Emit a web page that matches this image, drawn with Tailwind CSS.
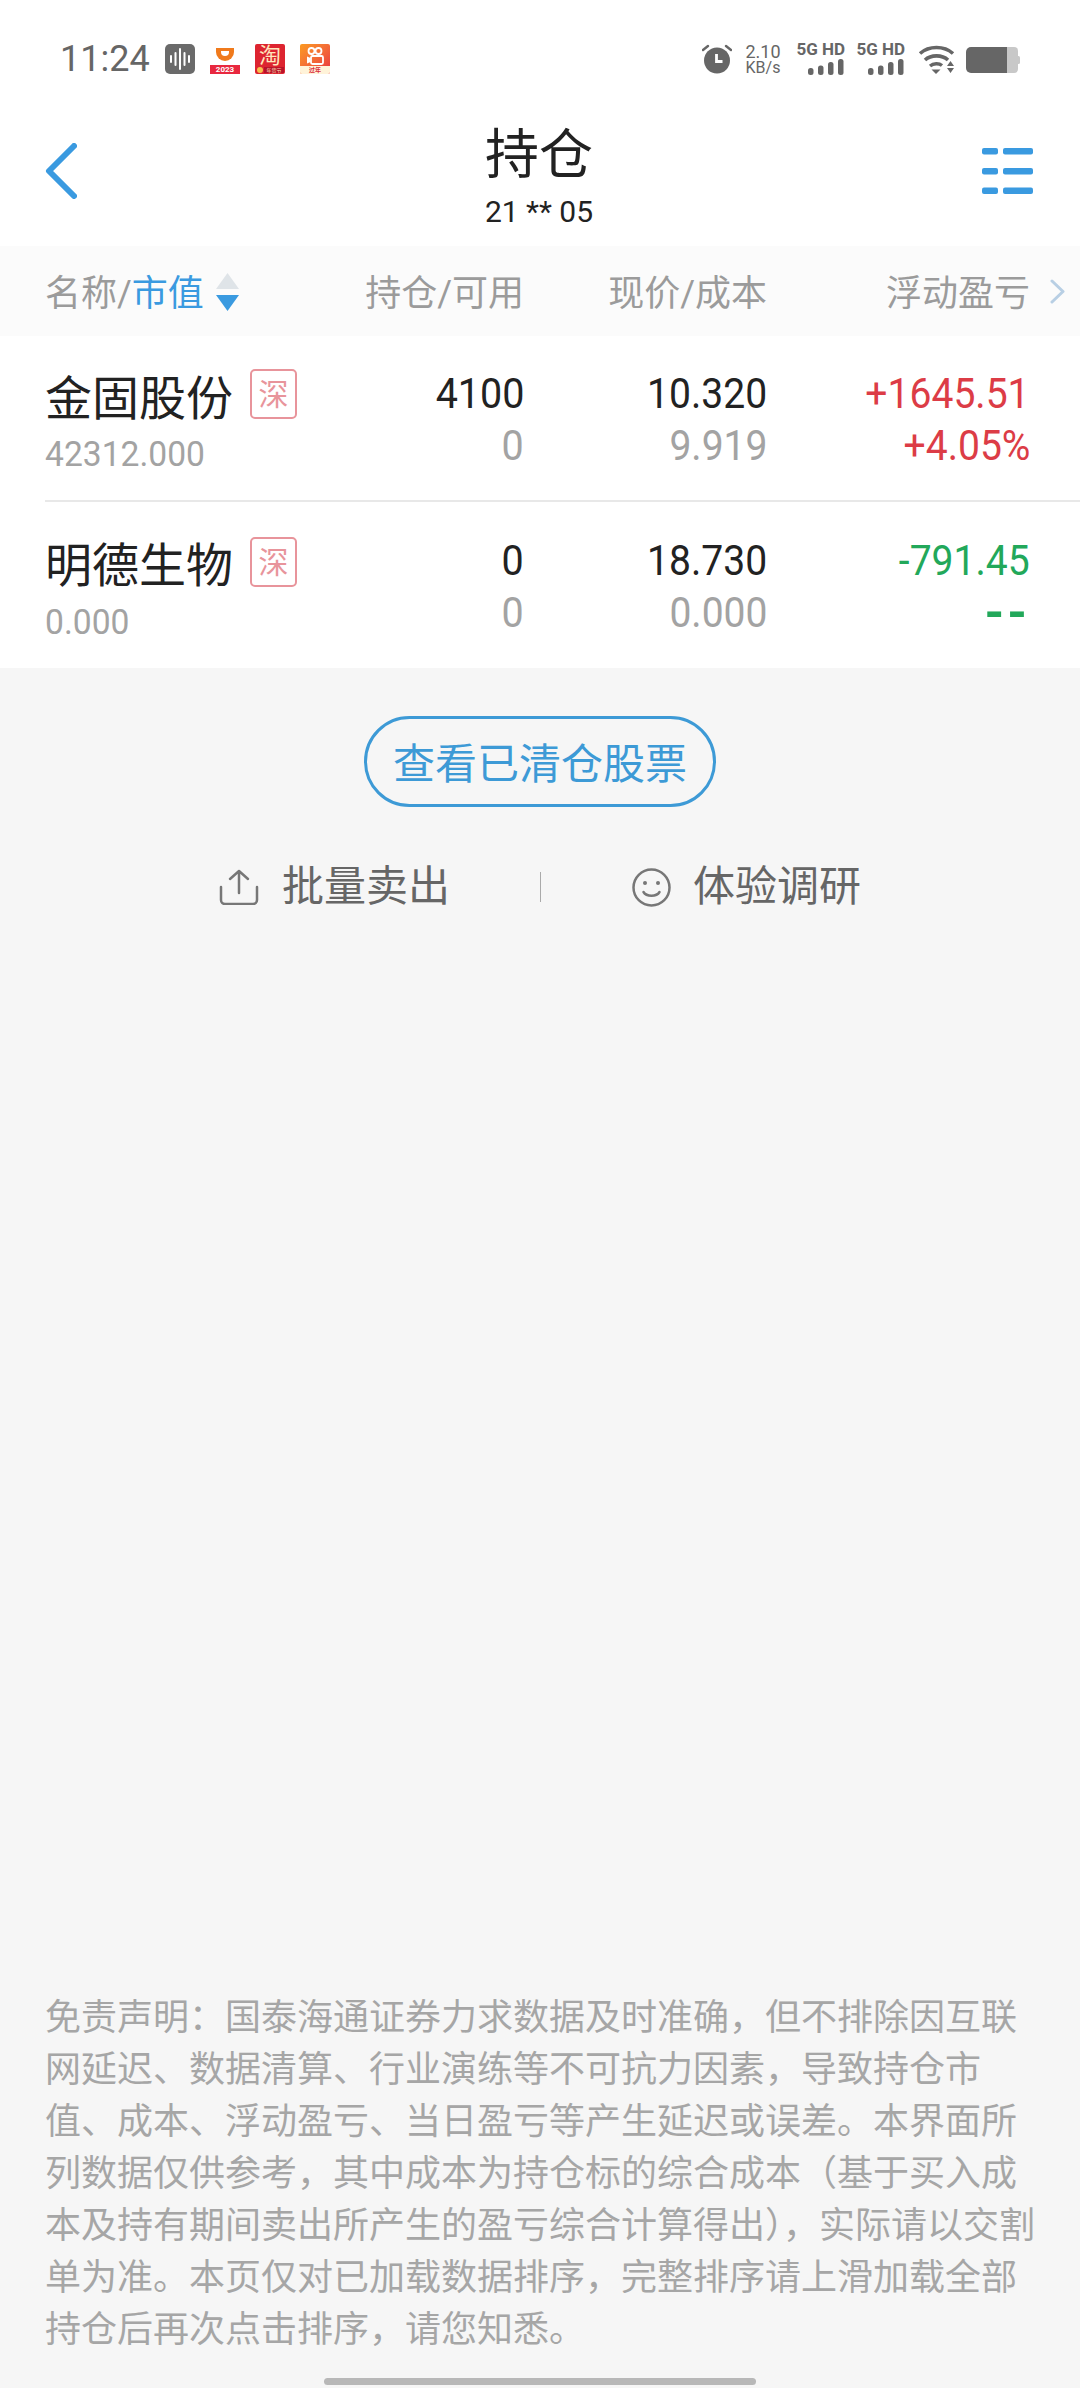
<!DOCTYPE html>
<html lang="zh-CN">
<head>
  <meta charset="UTF-8">
  <meta name="viewport" content="width=device-width, initial-scale=1.0">
  <title>持仓</title>
  <script src="https://cdn.jsdelivr.net/npm/@tailwindcss/browser@4"></script>
</head>
<body class="bg-[#f6f6f6] font-['Roboto','Noto_Sans_CJK_SC',sans-serif]">
  <div class="flex flex-col w-[1080px] h-[2388px] overflow-hidden">

    <!-- status bar -->
    <div class="flex justify-between items-start h-[100px] pt-[44px] pl-[60px] pr-[60px] bg-white text-[#666]">
      <div class="flex items-center h-[30px]">
        <span class="text-[36px] leading-[30px] w-[89px] mr-[16px]">11:24</span>
        <div class="flex gap-[15px]">
          <svg width="30" height="30" viewBox="0 0 30 30">
            <rect width="30" height="30" rx="5" fill="#6a6a6a"/>
            <path d="M6 12v6M10.500 9v12M15 5v20M19.500 9v12M24 12v6" stroke="#fff" stroke-width="2" stroke-linecap="round"/>
          </svg>
          <div class="relative w-[30px] h-[30px] bg-white overflow-hidden">
            <svg class="absolute left-0 top-0" width="30" height="30" viewBox="0 0 30 30">
              <path d="M6 4h18v4a9 9 0 0 1-18 0z" fill="#f07a1c"/>
              <path d="M11 7h8v1a4 4 0 0 1-8 0z" fill="#fff"/>
              <rect y="21" width="30" height="9" fill="#e8283f"/>
            </svg>
            <span class="absolute left-0 right-0 bottom-0 text-center text-[8px] leading-[9px] font-bold text-white">2023</span>
          </div>
          <div class="relative w-[30px] h-[30px] rounded-[2px] bg-[#dd2430] overflow-hidden">
            <span class="absolute left-0 right-0 top-[1px] text-center text-[22px] leading-[22px] text-[#ffe6bd]">淘</span>
            <span class="absolute left-[9px] right-[1px] bottom-[1px] bg-[#b8122a] text-center text-[5px] leading-[6px] text-[#ffe6bd]">年货节</span>
            <span class="absolute left-[2px] bottom-[1px] w-[6px] h-[6px] rounded-full bg-[#f6c04e]"></span>
          </div>
          <div class="relative w-[30px] h-[30px] rounded-[2px] bg-gradient-to-br from-[#fb9a1e] to-[#e8283f] overflow-hidden">
            <svg class="absolute left-0 top-0" width="30" height="30" viewBox="0 0 30 30">
              <circle cx="11.500" cy="7" r="3" fill="none" stroke="#fff" stroke-width="1.800"/>
              <circle cx="18.500" cy="7" r="3" fill="none" stroke="#fff" stroke-width="1.800"/>
              <rect x="11" y="12" width="12" height="8" rx="1.500" fill="none" stroke="#fff" stroke-width="1.800"/>
              <path d="M10.500 14l-3.500-1.500v7l3.500-1.500z" fill="#fff"/>
            </svg>
            <span class="absolute left-0 right-0 bottom-0 h-[8px] bg-[#fff3d9] text-center text-[6px] leading-[8px] font-bold text-[#d92b3a]">过年</span>
          </div>
        </div>
      </div>

      <div class="flex items-start h-[30px]">
        <svg class="mr-[13px]" width="30" height="30" viewBox="0 0 30 30">
          <circle cx="15" cy="16.500" r="13" fill="#666"/>
          <path d="M1 6l5-4M29 6l-5-4" stroke="#666" stroke-width="2.400" stroke-linecap="round"/>
          <path d="M14.500 10v7.500h6" fill="none" stroke="#fff" stroke-width="2.800"/>
        </svg>
        <div class="flex flex-col items-center w-[36px] mr-[15px]">
          <span class="text-[18px] leading-[15px]">2.10</span>
          <span class="text-[16px] leading-[14px] mt-[2px]">KB/s</span>
        </div>
        <div class="flex flex-col items-end w-[49px] mr-[11px] -mt-[1px]">
          <span class="text-[17px] leading-[13px] font-bold whitespace-nowrap">5G HD</span>
          <svg class="mt-[3px] mr-[1px]" width="36" height="16" viewBox="0 0 36 16">
            <rect x="0" y="9" width="5.500" height="7" rx="2.500" fill="#666"/>
            <rect x="10" y="6.500" width="5.500" height="9.500" rx="2.500" fill="#666"/>
            <rect x="20" y="3" width="5.500" height="13" rx="2.500" fill="#666"/>
            <rect x="30" y="0" width="5.500" height="16" rx="2.500" fill="#666"/>
          </svg>
        </div>
        <div class="flex flex-col items-end w-[49px] mr-[13px] -mt-[1px]">
          <span class="text-[17px] leading-[13px] font-bold whitespace-nowrap">5G HD</span>
          <svg class="mt-[3px] mr-[1px]" width="36" height="16" viewBox="0 0 36 16">
            <rect x="0" y="9" width="5.500" height="7" rx="2.500" fill="#666"/>
            <rect x="10" y="6.500" width="5.500" height="9.500" rx="2.500" fill="#666"/>
            <rect x="20" y="3" width="5.500" height="13" rx="2.500" fill="#666"/>
            <rect x="30" y="0" width="5.500" height="16" rx="2.500" fill="#666"/>
          </svg>
        </div>
        <svg class="mr-[11px] mt-[1px]" width="37" height="29" viewBox="0 0 37 29">
          <path d="M2 8.500C11 0.500 26 0.500 35 8.500" fill="none" stroke="#666" stroke-width="3.600"/>
          <path d="M7 15C13 9.500 24 9.500 30 15" fill="none" stroke="#666" stroke-width="3.600"/>
          <path d="M12 21C15.500 18 21 18 24 20.500" fill="none" stroke="#666" stroke-width="3.400"/>
          <path d="M13.500 24.500h9l-4.500 4.500z" fill="#666"/>
          <path d="M32.500 16l3.500 5h-7zM29 23h7l-3.500 5z" fill="#666"/>
        </svg>
        <svg class="mt-[3px]" width="54" height="26" viewBox="0 0 54 26">
          <path d="M41 0h7a4 4 0 0 1 4 4v18a4 4 0 0 1-4 4h-7z" fill="#c8c8c8"/>
          <path d="M52 9h0.500a1.500 1.500 0 0 1 1.500 1.500v5a1.500 1.500 0 0 1-1.500 1.500H52z" fill="#c8c8c8"/>
          <path d="M5 0h36v26H5a5 5 0 0 1-5-5V5a5 5 0 0 1 5-5z" fill="#666"/>
        </svg>
      </div>
    </div>

    <!-- title bar -->
    <div class="grid grid-cols-[1fr_auto_1fr] items-center h-[146px] pb-[4px] pl-[45px] pr-[47px] bg-white">
      <svg width="32" height="56" viewBox="0 0 32 56">
        <path d="M29 3L4 28l25 25" fill="none" stroke="#3a9ae0" stroke-width="6" stroke-linecap="round" stroke-linejoin="round"/>
      </svg>
      <div class="flex flex-col items-center pt-[11px] text-[#222]">
        <span class="text-[54px] leading-[60px]">持仓</span>
        <span class="text-[30px] leading-[30px] mt-[11px]">21 ** 05</span>
      </div>
      <svg class="justify-self-end" width="51" height="46" viewBox="0 0 51 46">
        <g fill="#3a9ae0">
          <rect x="0" y="0" width="16" height="6.500" rx="2"/>
          <rect x="21" y="0" width="30" height="6.500" rx="2"/>
          <rect x="0" y="20" width="16" height="6.500" rx="2"/>
          <rect x="21" y="20" width="30" height="6.500" rx="2"/>
          <rect x="0" y="39.500" width="16" height="6.500" rx="2"/>
          <rect x="21" y="39.500" width="30" height="6.500" rx="2"/>
        </g>
      </svg>
    </div>

    <!-- column headers -->
    <div class="relative grid grid-cols-[300px_179px_243px_263px] items-center h-[90px] pt-[5px] pl-[45px] pr-[50px] bg-[#fbfbfb] text-[36px] text-[#9b9b9b]">
      <div class="flex items-center">
        <span>名称/<span class="text-[#3a9ae0]">市值</span></span>
        <svg class="ml-[12px] -mt-[4px]" width="23" height="38" viewBox="0 0 23 38">
          <path d="M11.500 0L23 16H0z" fill="#dfe4e8"/>
          <path d="M0 22h23L11.500 38z" fill="#3a9ae0"/>
        </svg>
      </div>
      <span class="text-right">持仓/可用</span>
      <span class="text-right">现价/成本</span>
      <span class="text-right">浮动盈亏</span>
      <svg class="absolute right-[15px] top-[33px]" width="15" height="25" viewBox="0 0 15 25">
        <path d="M2 2l11 10.500L2 23" fill="none" stroke="#b8cfe4" stroke-width="3" stroke-linecap="round" stroke-linejoin="round"/>
      </svg>
    </div>

    <!-- holdings -->
    <div class="bg-white pl-[45px]">
      <div class="grid grid-cols-[300px_179px_243px_263px] h-[166px] pr-[50px] border-b-2 border-[#e8e8e8]">
        <div class="pt-[34px]">
          <div class="flex items-start">
            <span class="text-[47px] leading-[58px] text-[#222]">金固股份</span>
            <span class="flex items-center justify-center w-[47px] h-[50px] ml-[17px] -mt-[1px] rounded-[5px] border-2 border-[#e8949b] text-[30px] text-[#e8949b]">深</span>
          </div>
          <div class="text-[35px] leading-[40px] mt-[7px] font-[430] text-[#a3a3a3] scale-x-[.96] origin-left">42312.000</div>
        </div>
        <div class="flex flex-col items-end pt-[32px] text-[42px] leading-[52px] font-[430]">
          <span class="text-[#222] scale-x-[.94] origin-right">4100</span>
          <span class="text-[#a3a3a3] scale-x-[.94] origin-right">0</span>
        </div>
        <div class="flex flex-col items-end pt-[32px] text-[42px] leading-[52px] font-[430]">
          <span class="text-[#222] scale-x-[.93] origin-right">10.320</span>
          <span class="text-[#a3a3a3] scale-x-[.93] origin-right">9.919</span>
        </div>
        <div class="flex flex-col items-end pt-[32px] text-[42px] leading-[52px] font-[430] text-[#dc3c46]">
          <span class="scale-x-[.93] origin-right">+1645.51</span>
          <span class="scale-x-[.93] origin-right">+4.05%</span>
        </div>
      </div>
      <div class="grid grid-cols-[300px_179px_243px_263px] h-[166px] pr-[50px]">
        <div class="pt-[35px]">
          <div class="flex items-start">
            <span class="text-[47px] leading-[58px] text-[#222]">明德生物</span>
            <span class="flex items-center justify-center w-[47px] h-[50px] ml-[17px] rounded-[5px] border-2 border-[#e8949b] text-[30px] text-[#e8949b]">深</span>
          </div>
          <div class="text-[35px] leading-[40px] mt-[8px] font-[430] text-[#a3a3a3] scale-x-[.96] origin-left">0.000</div>
        </div>
        <div class="flex flex-col items-end pt-[33px] text-[42px] leading-[52px] font-[430]">
          <span class="text-[#222] scale-x-[.94] origin-right">0</span>
          <span class="text-[#a3a3a3] scale-x-[.94] origin-right">0</span>
        </div>
        <div class="flex flex-col items-end pt-[33px] text-[42px] leading-[52px] font-[430]">
          <span class="text-[#222] scale-x-[.93] origin-right">18.730</span>
          <span class="text-[#a3a3a3] scale-x-[.93] origin-right">0.000</span>
        </div>
        <div class="flex flex-col items-end pt-[33px] text-[42px] leading-[52px] font-[430] text-[#22a85a]">
          <span class="scale-x-[.93] origin-right">-791.45</span>
          <span class="text-[50px] font-bold tracking-[3px]">--</span>
        </div>
      </div>
    </div>

    <!-- cleared positions link -->
    <div class="flex justify-center mt-[48px]">
      <button class="w-[352px] h-[91px] pt-[5px] rounded-full border-[3px] border-[#3d9ad6] text-[42px] text-[#3d9ad6]">查看已清仓股票</button>
    </div>

    <!-- actions -->
    <div class="flex justify-center items-center h-[60px] mt-[50px] text-[42px] text-[#666]">
      <svg class="mr-[23px]" width="40" height="36" viewBox="0 0 40 36">
        <path d="M20 24V2M11 10l9-8 9 8" fill="none" stroke="#777" stroke-width="2.500" stroke-linecap="round" stroke-linejoin="round"/>
        <path d="M2 18v13a4 4 0 0 0 4 4h28a4 4 0 0 0 4-4V18" fill="none" stroke="#777" stroke-width="2.500" stroke-linecap="round"/>
      </svg>
      <span class="w-[168px] leading-[60px] whitespace-nowrap">批量卖出</span>
      <span class="w-[1px] h-[30px] ml-[90px] mr-[91px] bg-[#aaa]"></span>
      <svg class="mr-[22px]" width="39" height="39" viewBox="0 0 39 39">
        <circle cx="19.500" cy="19.500" r="18" fill="none" stroke="#777" stroke-width="2.500"/>
        <circle cx="13" cy="15" r="2" fill="#777"/>
        <circle cx="26" cy="15" r="2" fill="#777"/>
        <path d="M11.500 24c3 5 13 5 16 0" fill="none" stroke="#777" stroke-width="2.500" stroke-linecap="round"/>
      </svg>
      <span class="w-[168px] leading-[60px] whitespace-nowrap">体验调研</span>
    </div>

    <!-- disclaimer -->
    <p class="mt-auto pl-[45px] text-[36px] leading-[52px] text-[#a6a6a6] whitespace-nowrap">
      免责声明：国泰海通证券力求数据及时准确，但不排除因互联<br>
      网延迟、数据清算、行业演练等不可抗力因素，导致持仓市<br>
      值、成本、浮动盈亏、当日盈亏等产生延迟或误差。本界面所<br>
      列数据仅供参考，其中成本为持仓标的综合成本（基于买入成<br>
      本及持有期间卖出所产生的盈亏综合计算得出），实际请以交割<br>
      单为准。本页仅对已加载数据排序，完整排序请上滑加载全部<br>
      持仓后再次点击排序，请您知悉。
    </p>

    <!-- home indicator -->
    <div class="flex justify-center items-start h-[32px] pt-[22px]">
      <div class="w-[432px] h-[7px] rounded-full bg-[#b8b8b8]"></div>
    </div>
  </div>
</body>
</html>
